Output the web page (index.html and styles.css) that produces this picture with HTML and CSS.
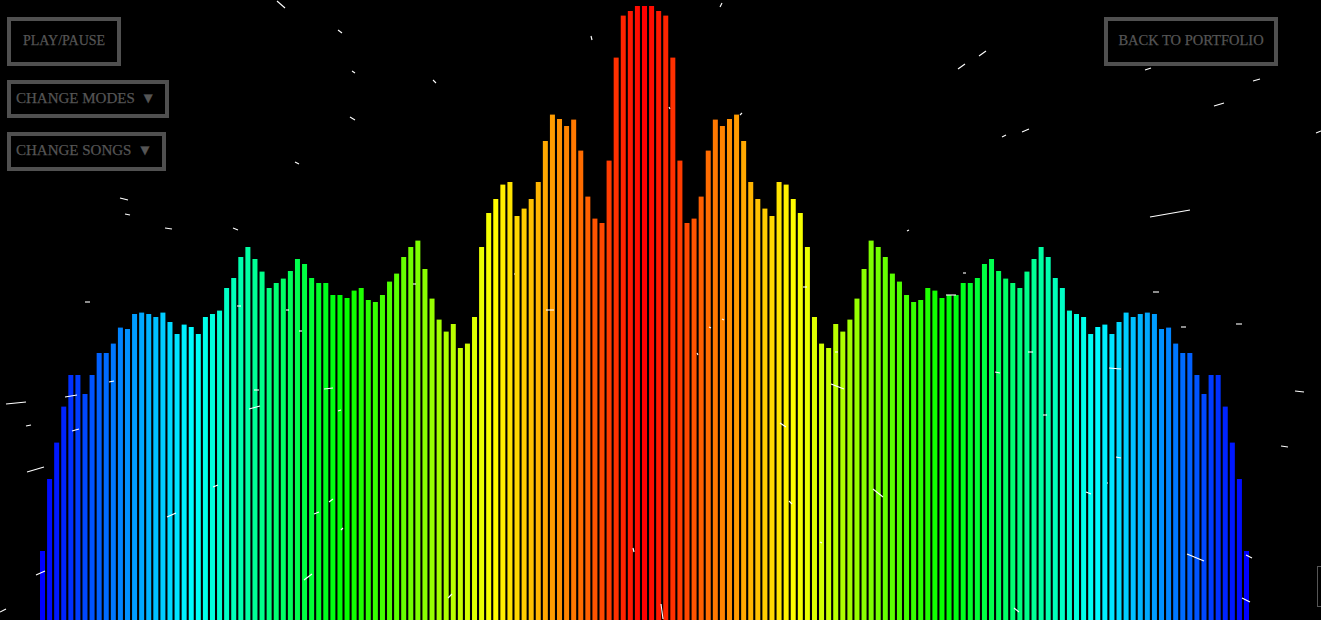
FILE: index.html
```html
<!DOCTYPE html>
<html lang="en">
<head>
<meta charset="utf-8">
<title>Audio Visualizer</title>
<link rel="stylesheet" href="styles.css">
</head>
<body>
<canvas id="visualizer" class="visualizer" width="1321" height="620"></canvas>
<header class="controls">
  <div class="controls-left">
    <button class="btn btn-play" type="button">PLAY/PAUSE</button>
    <button class="btn btn-menu btn-modes" type="button">CHANGE MODES<span class="arrow">▼</span></button>
    <button class="btn btn-menu btn-songs" type="button">CHANGE SONGS<span class="arrow">▼</span></button>
  </div>
  <a class="btn btn-back" href="#">BACK TO PORTFOLIO</a>
</header>
<div class="edge-box"></div>
<script src="script.js"></script>
</body>
</html>
```
FILE: styles.css
```css
* { box-sizing: border-box; }
html, body { height: 100%; }
body {
  margin: 0;
  background: #000;
  overflow: hidden;
  position: relative;
  font-family: "Liberation Serif", "Times New Roman", serif;
}
.visualizer {
  position: absolute;
  inset: 0;
  display: block;
}
.controls {
  position: relative;
  display: flex;
  justify-content: space-between;
  align-items: flex-start;
  padding: 17px 43px 0 7px;
}
.controls-left {
  display: flex;
  flex-direction: column;
  align-items: flex-start;
  gap: 14px;
}
.btn {
  display: flex;
  align-items: center;
  justify-content: center;
  background: #000;
  border: 4px solid #505050;
  color: #555;
  -webkit-text-stroke: 0.25px #555;
  font-family: inherit;
  padding: 0 0 2px;
  text-decoration: none;
  white-space: nowrap;
}
.btn-play {
  width: 114px;
  height: 49px;
  font-size: 14px;
}
.btn-menu {
  height: 38.4px;
  justify-content: flex-start;
  padding-left: 5px;
  font-size: 15px;
}
.btn-modes { width: 162px; }
.btn-songs { width: 159px; }
.arrow {
  margin-left: 6px;
  font-size: 15px;
}
.btn-back {
  width: 174px;
  height: 49px;
  font-size: 14.5px;
}
.edge-box {
  position: absolute;
  left: 1317px;
  top: 566px;
  width: 40px;
  height: 41px;
  border: 1px solid #555;
}
```
FILE: script.js
```js
(function () {
  var tops = [
    551,479,442,406,375,375,394,375,353,353,
    343,327,329,314,312,314,317,312,322,334,
    324,327,334,317,314,310,288,278,257,247,
    259,271,288,283,278,271,259,264,278,283,
    283,295,295,298,290,288,300,302,295,281,
    273,257,247,240,269,298,319,331,324,348,
    343,317,247,213,199,184,182,216,208,199,
    182,141,114,119,126,119,150,196,218,223,
    160,57,15,11,6,6
  ];
  // Bars whose top edge falls between two pixel rows.
  var softTop = [2,3,10,11,14,17,20,25,31,34,44,49,50,53,55,56,57,60,65,68,72,75,76,77,78,80,81,82];
  var stars = [
    [277,1,285,8],[338,30,342,33],[352,71,355,73],[350,117,355,120],[433,80,436,83],
    [591,36,592,40],[720,7,722,3],[958,69,965,64],[979,56,986,51],[740,115,742,113],
    [669,107,670,109],[803,287,807,287],[413,284,416,284],[514,274,515,274],[546,310,554,310],
    [907,231,909,230],[963,273,966,273],[946,295,956,295],[1145,70,1151,68],[1253,81,1260,79],
    [1214,106,1224,103],[1002,137,1006,135],[1022,132,1029,129],[1316,133,1321,131],[1150,217,1190,210],
    [1153,292,1159,292],[1181,327,1186,327],[1236,324,1242,324],[1028,352,1033,352],[1109,368,1121,369],
    [1295,391,1304,392],[1043,415,1047,415],[1281,446,1288,447],[1116,457,1121,458],[1187,554,1204,561],
    [1246,555,1252,558],[1242,598,1250,602],[995,372,1000,373],[1086,492,1091,494],[1107,483,1108,483],
    [633,548,634,552],[661,604,663,619],[697,353,698,355],[709,327,711,328],[722,319,724,320],
    [780,423,786,427],[789,501,792,504],[820,542,822,543],[835,352,838,352],[831,384,844,389],
    [873,489,883,497],[1014,608,1019,612],[6,404,26,402],[26,426,31,425],[27,472,44,467],
    [65,397,77,395],[72,431,79,429],[109,382,114,381],[36,575,45,571],[0,612,6,609],
    [85,302,90,302],[237,306,241,306],[286,310,289,310],[299,331,302,331],[254,390,259,390],
    [249,409,260,406],[324,389,333,388],[167,517,176,513],[213,487,218,485],[314,514,319,512],
    [304,580,312,574],[329,502,333,499],[341,530,343,528],[120,198,128,200],[125,214,130,215],
    [165,228,172,229],[233,228,238,230],[295,162,299,164],[338,411,341,410],[448,598,452,594]
  ];

  var ctx = document.getElementById('visualizer').getContext('2d');
  var pitch = 1204 / 170;

  for (var i = 0; i <= 170; i++) {
    var k = i <= 85 ? i : 170 - i;
    var barTop = tops[k] + (softTop.indexOf(k) >= 0 ? 0.6 : 0);
    ctx.fillStyle = 'hsl(' + (240 * (1 - k / 85)) + ',100%,50%)';
    ctx.fillRect(40 + i * pitch, barTop, 5, 620 - barTop);
  }

  ctx.strokeStyle = '#fff';
  ctx.lineWidth = 1.1;
  stars.forEach(function (s) {
    ctx.beginPath();
    ctx.moveTo(s[0], s[1]);
    ctx.lineTo(s[2], s[3]);
    ctx.stroke();
  });
})();
```
